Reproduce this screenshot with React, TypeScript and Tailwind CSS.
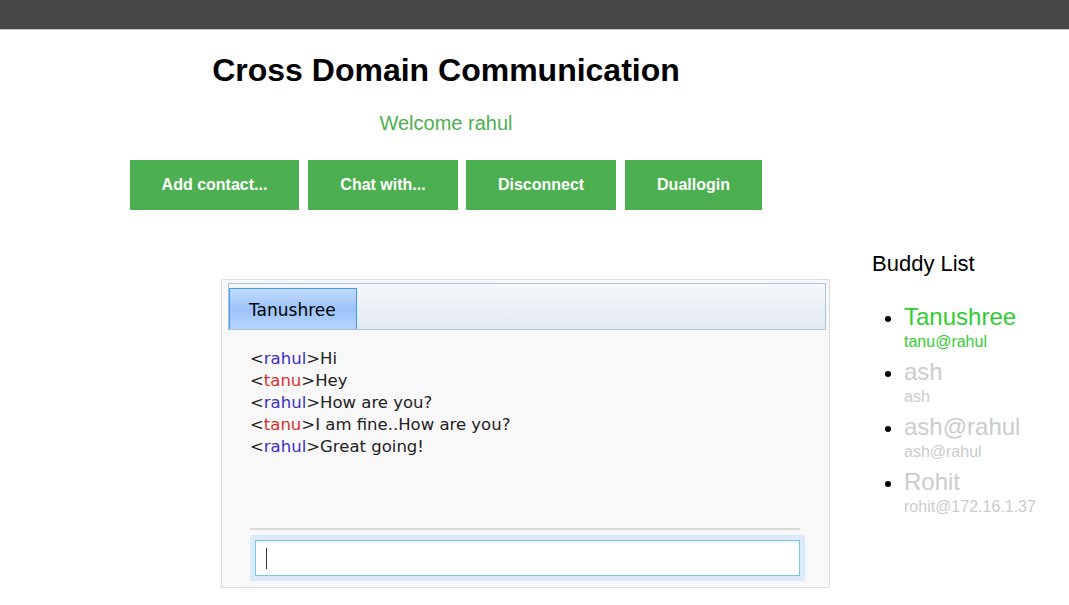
import type { ReactNode } from "react";

type Msg = { from: "rahul" | "tanu"; text: string };

const MESSAGES: Msg[] = [
  { from: "rahul", text: "Hi" },
  { from: "tanu", text: "Hey" },
  { from: "rahul", text: "How are you?" },
  { from: "tanu", text: "I am fine..How are you?" },
  { from: "rahul", text: "Great going!" },
];

const BUDDIES = [
  { name: "Tanushree", jid: "tanu@rahul", online: true },
  { name: "ash", jid: "ash", online: false },
  { name: "ash@rahul", jid: "ash@rahul", online: false },
  { name: "Rohit", jid: "rohit@172.16.1.37", online: false },
];

function GreenButton({ className, children }: { className: string; children: ReactNode }) {
  return (
    <button
      type="button"
      className={`${className} h-[50px] bg-[#4caf50] text-[16px] font-bold text-white`}
    >
      {children}
    </button>
  );
}

function ChatPanel() {
  return (
    <div className="mt-[27px] flex h-[309px] w-[609px] flex-col border border-[#dddddd] bg-[#f8f8f8]">
      {/* tab strip */}
      <div className="ml-[6px] mr-[3px] mt-[3px] flex h-[47px] items-end border border-[#aac6dc] bg-gradient-to-b from-[#f5f8fb] to-[#e2e9f1]">
        <div className="flex h-[41px] w-[128px] items-center border border-b-0 border-[#3d9cf0] bg-gradient-to-b from-[#c2dafd] via-[#9dc4fb] to-[#b6d3fc] pl-[19px] pt-[3px] font-['DejaVu_Sans',sans-serif] text-[17px] text-black">
          Tanushree
        </div>
      </div>

      {/* messages */}
      <div className="flex-1 pl-[28px] pt-[18px] font-['DejaVu_Sans',sans-serif] text-[16.5px] leading-[22px] text-[#222]">
        {MESSAGES.map((m, i) => (
          <div key={i}>
            &lt;
            <span className={m.from === "rahul" ? "text-[#3a2fc8]" : "text-[#d9302c]"}>{m.from}</span>
            &gt;{m.text}
          </div>
        ))}
      </div>

      {/* composer */}
      <div className="flex flex-col pb-[6px] pl-[28px]">
        <div className="h-[2px] w-[550px] bg-[#d9d9d9]" />
        <div className="mt-[5px] h-[46px] w-[555px] rounded-[2px] bg-[#dcebfa] p-[5px]">
          <div className="flex h-[36px] w-[545px] items-center border border-[#7cc6e6] bg-white pl-[10px] shadow-[inset_0_2px_2px_rgba(0,0,0,0.06)]">
            <span className="block h-[21px] w-px bg-[#333]" />
          </div>
        </div>
      </div>
    </div>
  );
}

function BuddyList() {
  return (
    <div className="font-['Liberation_Sans',Arial,sans-serif]">
      <h3 className="text-[22px] leading-[24px] text-black">Buddy List</h3>
      <ul className="mt-[27px] list-disc pl-[32px] text-[16px] marker:text-[20px] marker:text-black">
        {BUDDIES.map((b) => (
          <li key={b.name} className={`mb-[7px] ${b.online ? "text-[#33cc33]" : "text-[#cccccc]"}`}>
            <span className="block text-[24px] leading-[28px]">{b.name}</span>
            <span className="mt-[2px] block text-[16px] leading-[18px]">{b.jid}</span>
          </li>
        ))}
      </ul>
    </div>
  );
}

export default function App() {
  return (
    <div className="min-h-[605px] bg-white font-['Liberation_Sans',Arial,sans-serif]">
      <div className="h-[29px] bg-[#484848]" />
      <div className="h-px bg-[#c4c4c4]" />

      <div className="flex w-[892px] flex-col items-center">
        <h1 className="mt-[22px] text-[32px] font-bold leading-[37px] text-black">
          Cross Domain Communication
        </h1>
        <p className="mt-[23px] text-[20px] leading-[23px] text-[#4caf50]">Welcome rahul</p>
        <div className="mt-[25px] flex">
          <GreenButton className="w-[169px]">Add contact...</GreenButton>
          <GreenButton className="ml-[9px] w-[150px]">Chat with...</GreenButton>
          <GreenButton className="ml-[8px] w-[150px]">Disconnect</GreenButton>
          <GreenButton className="ml-[9px] w-[137px]">Duallogin</GreenButton>
        </div>
      </div>

      <div className="mt-[42px] flex pl-[221px]">
        <ChatPanel />
        <div className="ml-[42px]">
          <BuddyList />
        </div>
      </div>
    </div>
  );
}
